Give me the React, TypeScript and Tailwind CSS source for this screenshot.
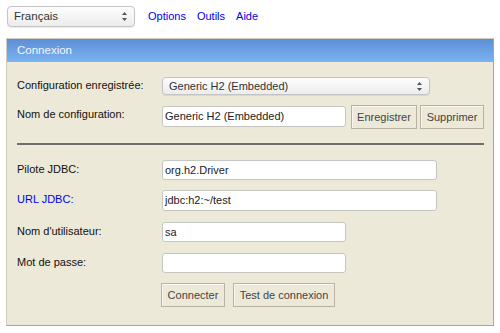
const Arrows = () => (
  <svg width="7" height="11" viewBox="0 0 7 11" className="shrink-0">
    <path d="M3.5 1 L6 4 L1 4 Z" fill="#555" />
    <path d="M3.5 10 L6 7 L1 7 Z" fill="#555" />
  </svg>
);

const Select = ({ value, className }: { value: string; className: string }) => (
  <div
    className={`flex shrink-0 items-center justify-between rounded-[4px] border border-[#c4c4c4] bg-gradient-to-b from-[#fdfdfd] to-[#ececec] pl-[6px] pr-[6px] text-[#333] shadow-[0_1px_1px_rgba(0,0,0,0.08)] ${className}`}
  >
    <span>{value}</span>
    <Arrows />
  </div>
);

const Input = ({ value, className }: { value?: string; className: string }) => (
  <div
    className={`flex shrink-0 items-center rounded-[3px] border border-[#c6c6c0] bg-white pl-[2px] text-[#222] ${className}`}
  >
    {value}
  </div>
);

const Button = ({ label, className }: { label: string; className?: string }) => (
  <div
    className={`flex h-[24px] shrink-0 items-center justify-center whitespace-nowrap border border-[#b8b2a2] bg-[#ece9d8] text-[11px] text-[#444] shadow-[inset_1px_1px_0_#f8f6ee] ${className ?? ""}`}
  >
    {label}
  </div>
);

const Label = ({ text, blue }: { text: string; blue?: boolean }) => (
  <div className={`w-[145px] shrink-0 ${blue ? "text-[#0000ee]" : "text-[#111]"}`}>{text}</div>
);

export default function App() {
  return (
    <div className="h-[333px] w-[500px] bg-white font-['Liberation_Sans',Arial,sans-serif] text-[11px]">
      {/* Top bar */}
      <div className="flex items-center pl-[7px] pt-[6px]">
        <Select value="Français" className="h-[21px] w-[128px] text-[11.5px]" />
        <div className="ml-[13px] flex gap-[11px] text-[11px] text-[#0000ee]">
          <span>Options</span>
          <span>Outils</span>
          <span>Aide</span>
        </div>
      </div>

      {/* Login panel */}
      <div className="ml-[6px] mt-[11px] w-[488px] border border-[#cfcbbd] border-b-[#a9a698] border-r-[#a9a698] bg-[#ece9d8]">
        <div className="flex h-[23px] items-center bg-gradient-to-b from-[#5b8ed8] to-[#7cb3f0] pl-[10px] text-[11.5px] text-[#f4f6fa]">
          Connexion
        </div>
        <div className="px-[10px] pb-[18px] text-[11px]">
          <div className="mt-[15px] flex items-start">
            <Label text="Configuration enregistrée:" />
            <Select value="Generic H2 (Embedded)" className="h-[18px] w-[268px]" />
          </div>
          <div className="mt-[10px] flex items-start">
            <div className="pt-[1px]">
              <Label text="Nom de configuration:" />
            </div>
            <Input value="Generic H2 (Embedded)" className="mt-[1px] h-[21px] w-[184px]" />
            <Button label="Enregistrer" className="ml-[5px] w-[66px]" />
            <Button label="Supprimer" className="ml-[3px] w-[64px]" />
          </div>
          <div className="mt-[14px] h-[2px] w-[467px] bg-[#6f6e68]" />
          <div className="mt-[15px] flex items-start">
            <div className="pt-[1px]">
              <Label text="Pilote JDBC:" />
            </div>
            <Input value="org.h2.Driver" className="h-[20px] w-[275px]" />
          </div>
          <div className="mt-[10px] flex items-start">
            <div className="pt-[1px]">
              <Label text="URL JDBC:" blue />
            </div>
            <Input value="jdbc:h2:~/test" className="h-[21px] w-[275px]" />
          </div>
          <div className="mt-[11px] flex items-start">
            <div className="pt-[1px]">
              <Label text="Nom d'utilisateur:" />
            </div>
            <Input value="sa" className="h-[20px] w-[184px]" />
          </div>
          <div className="mt-[11px] flex items-start">
            <div className="pt-[1px]">
              <Label text="Mot de passe:" />
            </div>
            <Input className="h-[20px] w-[184px]" />
          </div>
          <div className="mt-[10px] flex pl-[144px]">
            <Button label="Connecter" className="w-[64px]" />
            <Button label="Test de connexion" className="ml-[8px] w-[102px]" />
          </div>
        </div>
      </div>
    </div>
  );
}
